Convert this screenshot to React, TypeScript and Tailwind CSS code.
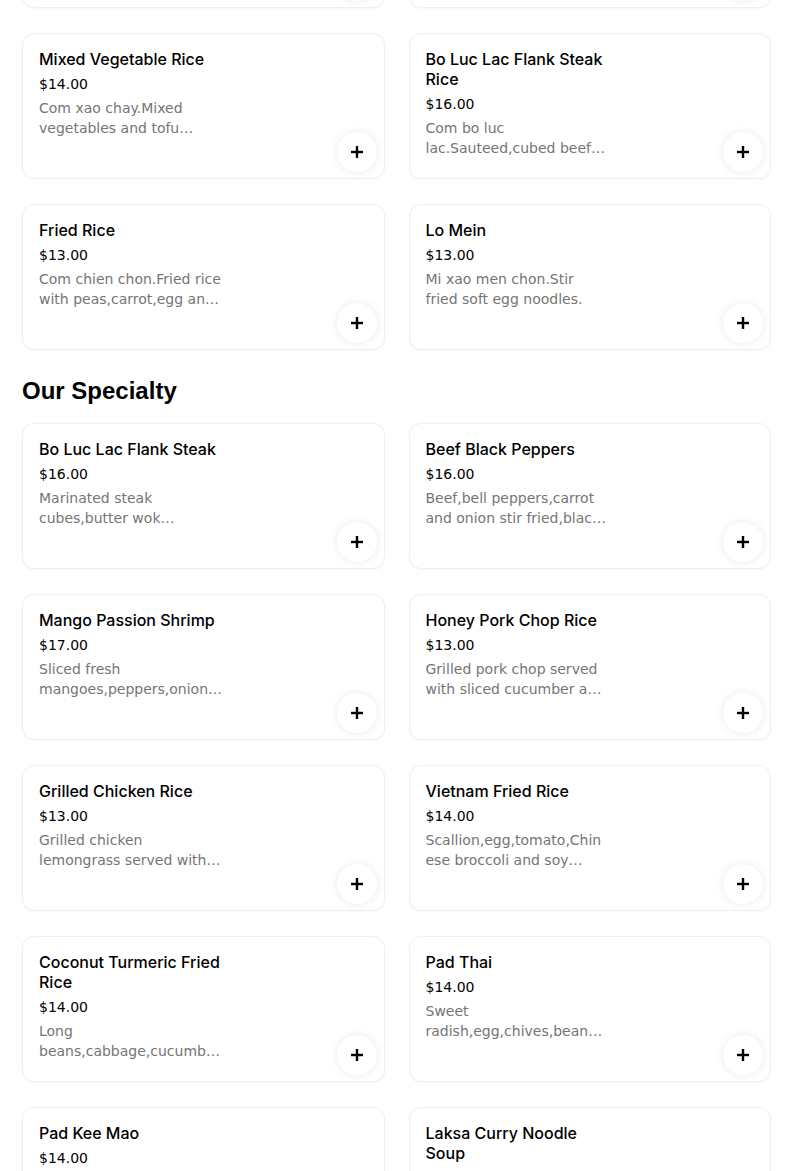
import React from "react";

type Item = { name: string; price: string; desc: string };

const prevRow: Item[] = [
  { name: "", price: "", desc: "" },
  { name: " ", price: "", desc: "" },
];

const riceRows: Item[] = [
  { name: "Mixed Vegetable Rice", price: "$14.00", desc: "Com xao chay.Mixed vegetables and tofu sauteed,garlic sauce served with rice." },
  { name: "Bo Luc Lac Flank Steak Rice", price: "$16.00", desc: "Com bo luc lac.Sauteed,cubed beef with onions,peppers served with rice." },
  { name: "Fried Rice", price: "$13.00", desc: "Com chien chon.Fried rice with peas,carrot,egg and onion." },
  { name: "Lo Mein", price: "$13.00", desc: "Mi xao men chon.Stir fried soft egg noodles." },
];

const specialty: Item[] = [
  { name: "Bo Luc Lac Flank Steak", price: "$16.00", desc: "Marinated steak cubes,butter wok tossed,onions,peppers." },
  { name: "Beef Black Peppers", price: "$16.00", desc: "Beef,bell peppers,carrot and onion stir fried,black pepper sauce." },
  { name: "Mango Passion Shrimp", price: "$17.00", desc: "Sliced fresh mangoes,peppers,onions and shrimp stir fried." },
  { name: "Honey Pork Chop Rice", price: "$13.00", desc: "Grilled pork chop served with sliced cucumber and tomato." },
  { name: "Grilled Chicken Rice", price: "$13.00", desc: "Grilled chicken lemongrass served with rice,cucumber and tomato." },
  { name: "Vietnam Fried Rice", price: "$14.00", desc: "Scallion,egg,tomato,Chinese broccoli and soy sauce fried rice." },
  { name: "Coconut Turmeric Fried Rice", price: "$14.00", desc: "Long beans,cabbage,cucumber,coconut and turmeric fried rice." },
  { name: "Pad Thai", price: "$14.00", desc: "Sweet radish,egg,chives,bean sprouts,peanuts and rice noodles." },
  { name: "Pad Kee Mao", price: "$14.00", desc: "Drunken noodles,basil,peppers,onions and egg." },
  { name: "Laksa Curry Noodle Soup", price: "$15.00", desc: "Coconut curry broth,rice noodles,shrimp and tofu." },
];

function PlusIcon() {
  return (
    <svg width="12" height="12" viewBox="0 0 12 12" aria-hidden="true">
      <rect x="4.8" y="0" width="2.4" height="12" fill="#000" />
      <rect x="0" y="4.8" width="12" height="2.4" fill="#000" />
    </svg>
  );
}

function Card({ item }: { item: Item }) {
  return (
    <div className="relative h-[146px] rounded-xl border border-[#efefef] bg-white px-4 pt-[15px] shadow-[0_1px_3px_rgba(0,0,0,0.03)]">
      <div className="w-[184px]">
        <div className="text-[16px] leading-5 font-medium text-black" style={{ fontFamily: "Inter, 'Noto Sans', sans-serif" }}>
          {item.name}
        </div>
        <div className="mt-[5px] text-[14px] leading-5 text-black" style={{ fontFamily: "'DejaVu Sans', sans-serif" }}>
          {item.price}
        </div>
        <div
          className="mt-[4px] line-clamp-2 break-words text-[14px] leading-5 text-[#757575]"
          style={{ fontFamily: "'DejaVu Sans', sans-serif" }}
        >
          {item.desc}
        </div>
      </div>
      <button className="absolute right-[7px] bottom-[6px] flex h-10 w-10 items-center justify-center rounded-full bg-white shadow-[0_0_8px_rgba(0,0,0,0.09)]">
        <PlusIcon />
      </button>
    </div>
  );
}

function Grid({ items }: { items: Item[] }) {
  return (
    <div className="grid grid-cols-2 gap-x-[24px] gap-y-[25px]">
      {items.map((it, i) => (
        <Card key={i} item={it} />
      ))}
    </div>
  );
}

export default function App() {
  return (
    <div className="h-[1171px] overflow-hidden bg-white">
      <div className="ml-[22px] mt-[-138px] w-[749px]">
        <Grid items={[...prevRow, ...riceRows]} />
        <h2
          className="mt-[25px] mb-[16px] text-[24px] leading-8 font-bold text-black"
          style={{ fontFamily: "'Liberation Sans', Arial, sans-serif" }}
        >
          Our Specialty
        </h2>
        <Grid items={specialty} />
      </div>
    </div>
  );
}
